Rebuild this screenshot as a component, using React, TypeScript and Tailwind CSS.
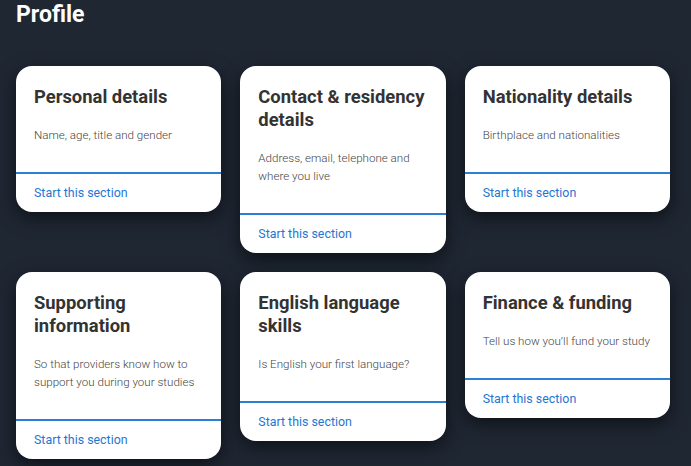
const sections = [
  { title: "Personal details", text: "Name, age, title and gender" },
  { title: "Contact & residency details", text: "Address, email, telephone and where you live" },
  { title: "Nationality details", text: "Birthplace and nationalities" },
  { title: "Supporting information", text: "So that providers know how to support you during your studies" },
  { title: "English language skills", text: "Is English your first language?" },
  { title: "Finance & funding", text: "Tell us how you’ll fund your study" },
];

const SectionCard = ({ title, text }: { title: string; text: string }) => {
  return (
    <div className="self-start overflow-hidden rounded-2xl bg-white shadow-[0_6px_18px_rgba(0,0,0,0.55)]">
      <div className="pl-[18px] pr-[12px] pt-[19px] pb-[28px]">
        <h2 className="text-[18.4px] font-bold leading-[23px] text-[#333]">{title}</h2>
        <p className="mt-[18px] text-[11.6px] font-light leading-[18px] text-[#444]">{text}</p>
      </div>
      <div className="flex h-[40px] items-center border-t-2 border-[#2b7fd6] px-[18px] pt-[1px]">
        <a href="#" className="text-[12.4px] text-[#1f76d2]">
          Start this section
        </a>
      </div>
    </div>
  );
};

export default function App() {
  return (
    <div className="min-h-[466px] bg-[#1f2733] font-['Roboto',sans-serif]">
      <h1 className="pl-4 text-[23px] font-bold leading-[30px] text-white">Profile</h1>
      <div className="ml-4 mt-[36px] grid w-[654px] grid-cols-3 gap-[19px]">
        {sections.map((s) => (
          <SectionCard key={s.title} title={s.title} text={s.text} />
        ))}
      </div>
    </div>
  );
}
